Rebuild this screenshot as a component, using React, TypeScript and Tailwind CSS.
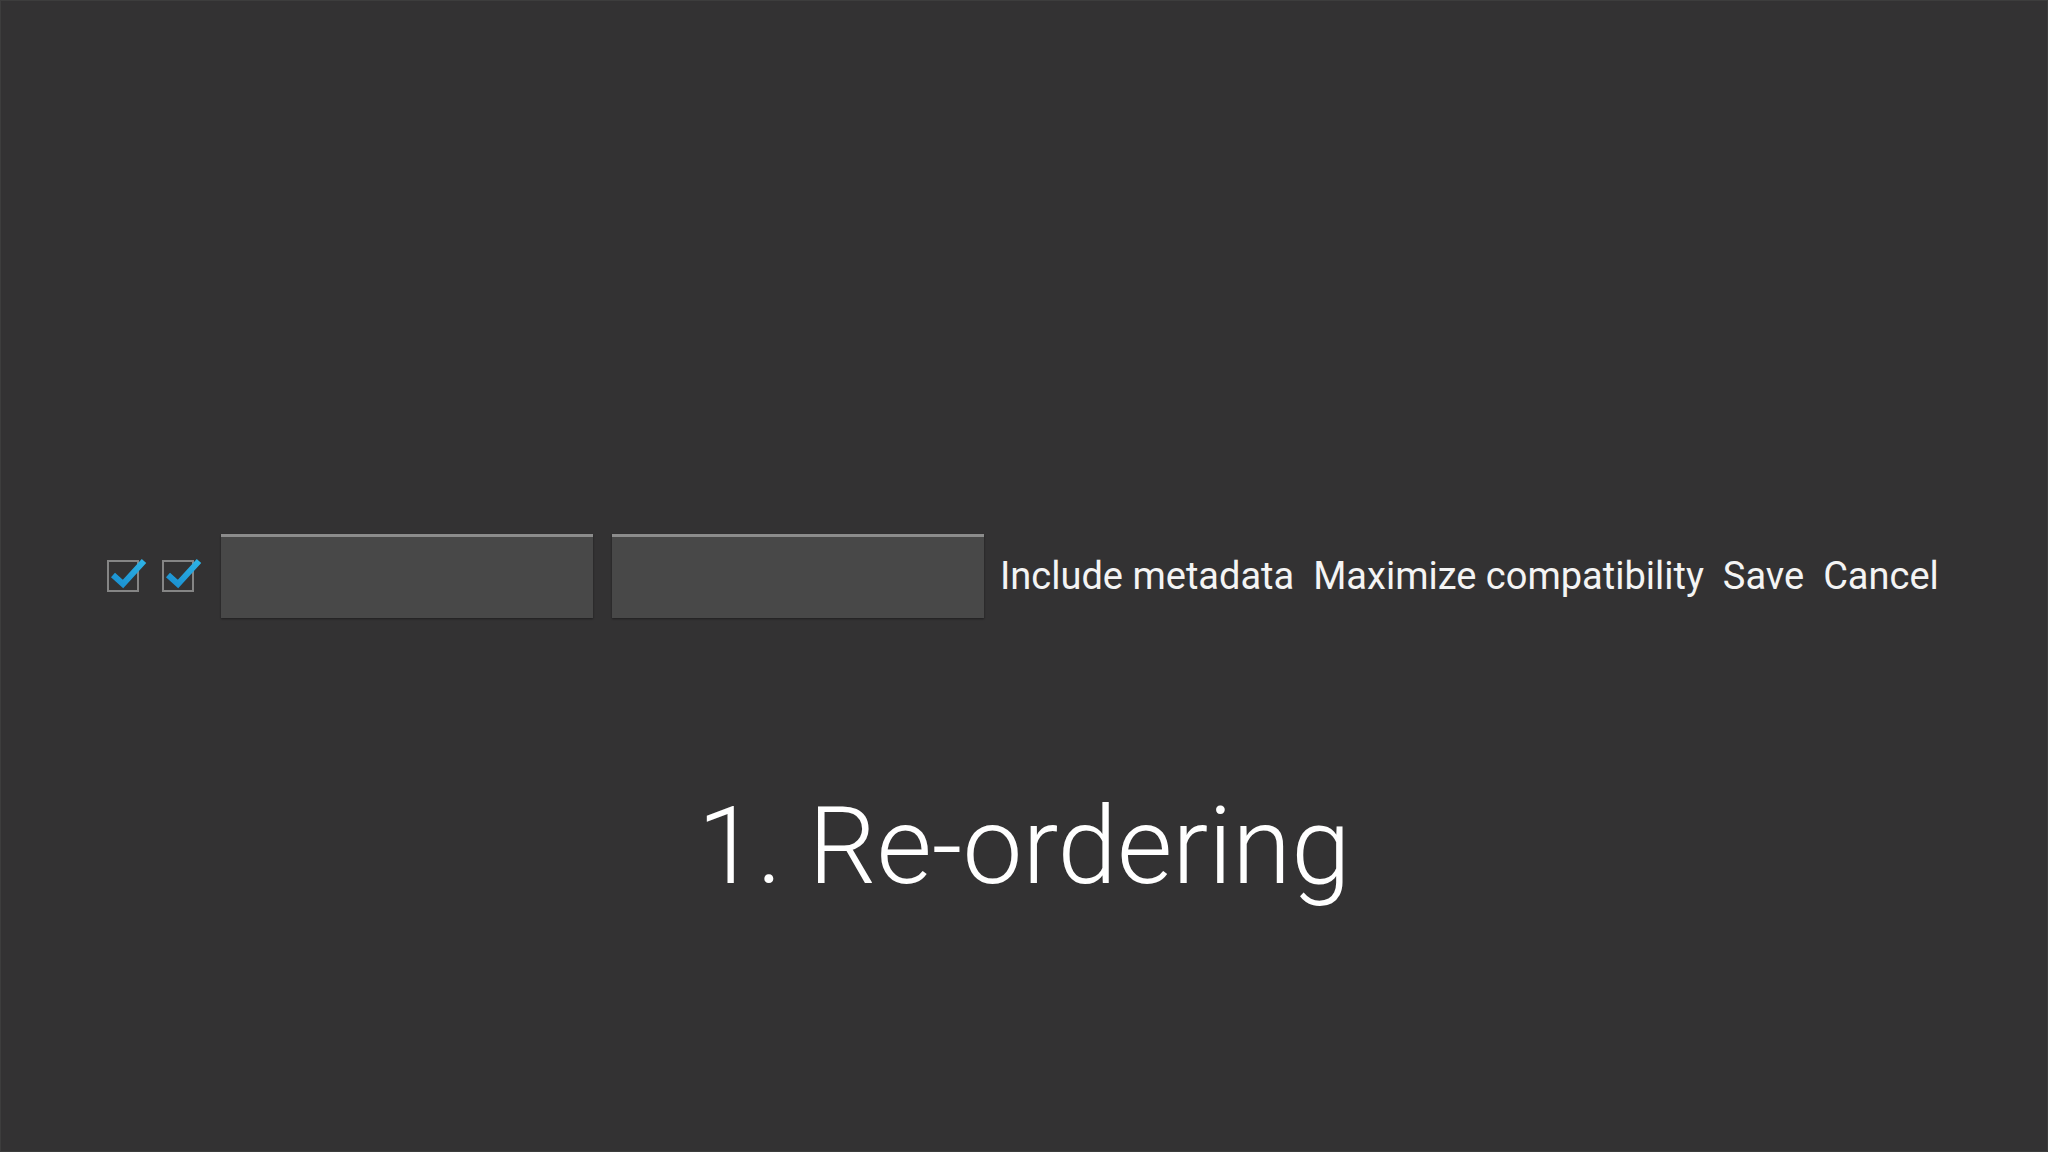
import React from "react";

function Check() {
  return (
    <div className="relative w-[32px] h-[32px]">
      <div className="absolute inset-0 border-2 border-[#858585]" />
      <svg className="absolute left-0 -top-[2px] overflow-visible" width="40" height="34" viewBox="0 0 40 34">
        <defs>
          <linearGradient id="ck" x1="0" y1="1" x2="1" y2="0">
            <stop offset="0" stopColor="#1a8fd0" />
            <stop offset="1" stopColor="#2db3e6" />
          </linearGradient>
        </defs>
        <path d="M6 17 L16 26 L37 3" fill="none" stroke="url(#ck)" strokeWidth="6" strokeLinecap="butt" strokeLinejoin="miter" />
      </svg>
    </div>
  );
}

function Field() {
  return (
    <div className="w-[372px] h-[84px] bg-[#484848] border-t-[3px] border-[#8c8c8c] shadow-[0_1px_2px_rgba(0,0,0,0.4)]" />
  );
}

export default function App() {
  return (
    <div
      className="w-[2048px] h-[1152px] bg-[#333233] border border-[#3d3d3d] flex flex-col text-white"
      style={{ fontFamily: "Roboto, 'Noto Sans', sans-serif" }}
    >
      <div className="flex items-center pl-[106px] mt-[533px]">
        <div className="flex items-center gap-[23px]">
          <Check />
          <Check />
        </div>
        <div className="flex items-center gap-[19px] ml-[27px]">
          <Field />
          <Field />
        </div>
        <div className="flex items-center gap-[19px] ml-[16px] text-[38px] leading-none text-[#f4f4f4]">
          <span>Include metadata</span>
          <span>Maximize compatibility</span>
          <span>Save</span>
          <span>Cancel</span>
        </div>
      </div>
      <div className="mt-[175px] text-center text-[107px] font-light leading-none text-white">
        1. Re-ordering
      </div>
    </div>
  );
}
